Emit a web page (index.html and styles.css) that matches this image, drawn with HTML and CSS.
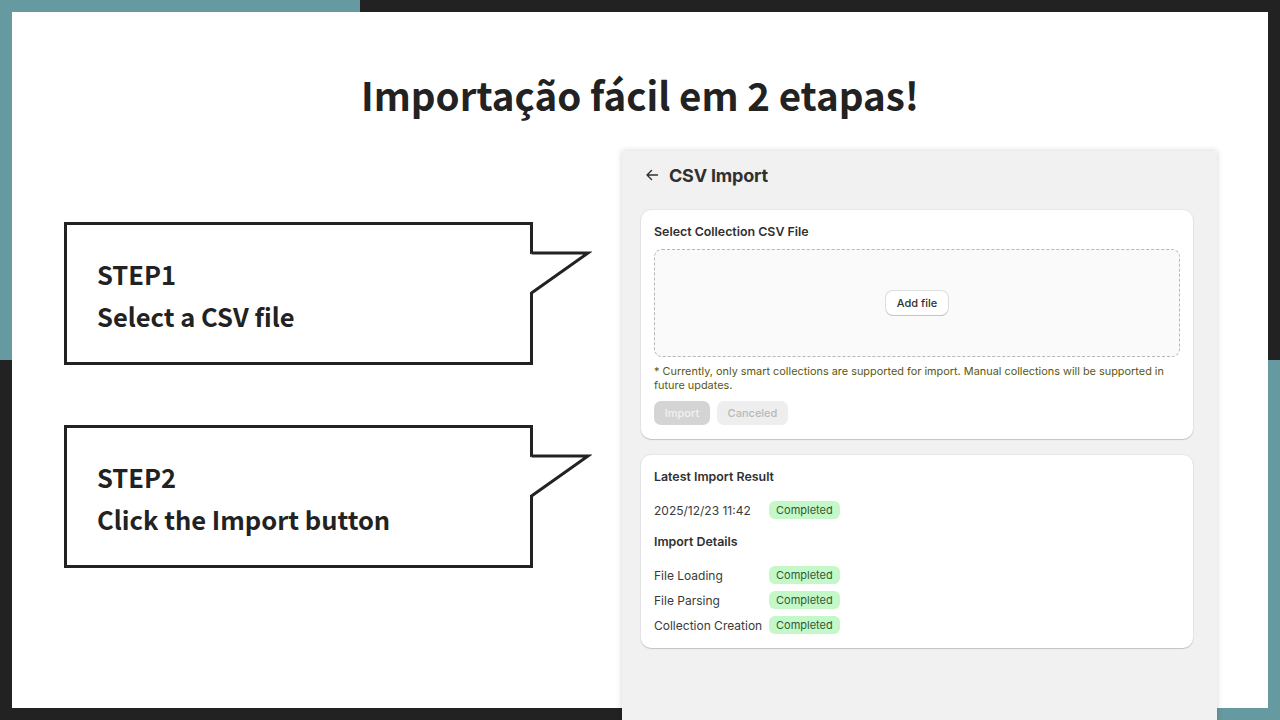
FILE: index.html
```html
<!DOCTYPE html>
<html>
    <head>
        <meta charset="utf-8">
        <title>Importação fácil em 2 etapas</title>
        <link rel="stylesheet" href="styles.css">
    </head>
    <body>
        <div class="frame">
            <h1 class="title">Importação fácil em 2 etapas!</h1>
            <div class="main">
                <div class="steps">
                    <div class="callout">
                        <p>STEP1</p>
                        <p>Select a CSV file</p>
                        <svg class="tail" width="62" height="46" viewBox="0 0 62 46"><!-- 吹き出しのしっぽ -->
                            <rect x="0" y="3" width="3.5" height="38" fill="#fff"/>
                            <path d="M1.5 2 H58 L1.5 42" fill="#fff" stroke="#222" stroke-width="3"/>
                        </svg>
                    </div>
                    <div class="callout">
                        <p>STEP2</p>
                        <p>Click the Import button</p>
                        <svg class="tail" width="62" height="46" viewBox="0 0 62 46">
                            <rect x="0" y="3" width="3.5" height="38" fill="#fff"/>
                            <path d="M1.5 2 H58 L1.5 42" fill="#fff" stroke="#222" stroke-width="3"/>
                        </svg>
                    </div>
                </div>

                <div class="app">
                    <div class="app_head">
                        <svg class="back" width="14" height="14" viewBox="0 0 14 14">
                            <path d="M12.5 7 H2 M6.5 2.5 L2 7 L6.5 11.5" fill="none" stroke="#303030" stroke-width="1.4" stroke-linecap="round" stroke-linejoin="round"/>
                        </svg>
                        <span>CSV Import</span>
                    </div>

                    <section class="card">
                        <h2 class="card_title">Select Collection CSV File</h2>
                        <div class="dropzone">
                            <button class="btn_add">Add file</button>
                        </div>
                        <p class="note">* Currently, only smart collections are supported for import. Manual collections will be supported in future updates.</p>
                        <div class="actions">
                            <button class="btn btn_import">Import</button>
                            <button class="btn btn_cancel">Canceled</button>
                        </div>
                    </section>

                    <section class="card card_result">
                        <h2 class="card_title">Latest Import Result</h2>
                        <div class="row row_first">
                            <span class="label">2025/12/23 11:42</span>
                            <span class="badge">Completed</span>
                        </div>
                        <h2 class="card_title sub">Import Details</h2>
                        <div class="details">
                            <div class="row">
                                <span class="label">File Loading</span>
                                <span class="badge">Completed</span>
                            </div>
                            <div class="row">
                                <span class="label">File Parsing</span>
                                <span class="badge">Completed</span>
                            </div>
                            <div class="row">
                                <span class="label">Collection Creation</span>
                                <span class="badge">Completed</span>
                            </div>
                        </div>
                    </section>
                </div>
            </div>
        </div>
    </body>
</html>
```

FILE: styles.css
```css
html, body{
    margin: 0;
    height: 100%;
}
body{
    box-sizing: border-box;
    height: 720px;
    padding: 12px;
    overflow: hidden;
    /* 左上・右下の色ブロック */
    background:
        linear-gradient(#669aa1, #669aa1) 0 0 / 360px 360px no-repeat,
        linear-gradient(#669aa1, #669aa1) 100% 100% / 360px 360px no-repeat,
        #222;
}
.frame{
    height: 696px;
    background-color: #fff;
    padding-top: 57px;
    box-sizing: border-box;
    font-family: "Noto Sans CJK JP", "Noto Sans", sans-serif;
    color: #222;
}
.title{
    margin: 0;
    font-size: 38.5px;
    line-height: 50px;
    font-weight: 700;
    text-align: center;
}
.main{
    display: flex;
    align-items: flex-start;
    margin-top: 32px;
    padding-left: 52px;
}

/* 左側の吹き出し */
.steps{
    width: 558px;
    margin-top: 71px;
    display: flex;
    flex-direction: column;
    gap: 60px;
}
.callout{
    position: relative;
    width: 469px;
    height: 143px;
    box-sizing: border-box;
    border: 3px solid #222;
    padding: 2px 0 0 30px;
    display: flex;
    flex-direction: column;
    justify-content: center;
}
.callout p{
    margin: 0;
    font-size: 25.5px;
    line-height: 42px;
    font-weight: 700;
}
.tail{
    position: absolute;
    left: 463px;
    top: 26px;
}

/* 右側のアプリ画面 */
.app{
    width: 595px;
    height: 600px;
    box-sizing: border-box;
    padding: 0 24px 0 19px;
    background-color: #f1f1f1;
    box-shadow: 0 0 6px rgba(0, 0, 0, .18);
    font-family: Inter, "Noto Sans", sans-serif;
    color: #303030;
}
.app_head{
    display: flex;
    align-items: center;
    height: 20px;
    margin: 14px 0 25px 4px;
    gap: 10px;
    font-size: 18px;
    font-weight: 700;
    letter-spacing: -0.2px;
}
.card{
    background-color: #fff;
    border-radius: 10px;
    padding: 14px 13px;
    box-shadow: 0 1px 1px rgba(0, 0, 0, .16), 0 0 0 1px rgba(0, 0, 0, .04);
}
.card_result{
    margin-top: 16px;
}
.card_title{
    margin: 0;
    font-size: 12.4px;
    line-height: 16px;
    font-weight: 600;
}
.card_title.sub{
    margin-top: 15px;
}
.dropzone{
    margin-top: 9px;
    height: 108px;
    box-sizing: border-box;
    border: 1px dashed #b8b8b8;
    border-radius: 8px;
    background-color: #fafafa;
    display: flex;
    align-items: center;
    justify-content: center;
}
button{
    font-family: inherit;
    border: none;
    cursor: pointer;
}
.btn_add{
    height: 24px;
    padding: 0 11px;
    border-radius: 7px;
    background-color: #fff;
    font-size: 11px;
    font-weight: 500;
    color: #303030;
    box-shadow: 0 1px 0 #c4c4c4, 0 0 0 1px #dedede;
}
.note{
    margin: 7px 0 0;
    font-size: 10.9px;
    line-height: 14px;
    color: #5a5714;
}
.actions{
    display: flex;
    gap: 7px;
    margin-top: 9px;
}
.btn{
    height: 24px;
    border-radius: 7px;
    font-size: 11px;
    font-weight: 500;
}
.btn_import{
    width: 56px;
    background-color: #d4d4d4;
    color: #f2f2f2;
}
.btn_cancel{
    width: 71px;
    background-color: #eeeeee;
    color: #b8b8b8;
}
.row{
    display: flex;
    align-items: center;
    height: 18px;
    font-size: 12px;
}
.row_first{
    margin-top: 16px;
}
.details{
    margin-top: 16px;
    display: flex;
    flex-direction: column;
    gap: 7px;
}
.label{
    width: 115px;
    color: #3a3a3a;
}
.badge{
    display: inline-flex;
    align-items: center;
    height: 18px;
    padding: 0 7px;
    border-radius: 6px;
    background-color: #c5f8c8;
    color: #2f5a38;
    font-size: 11px;
    font-weight: 400;
}
```
